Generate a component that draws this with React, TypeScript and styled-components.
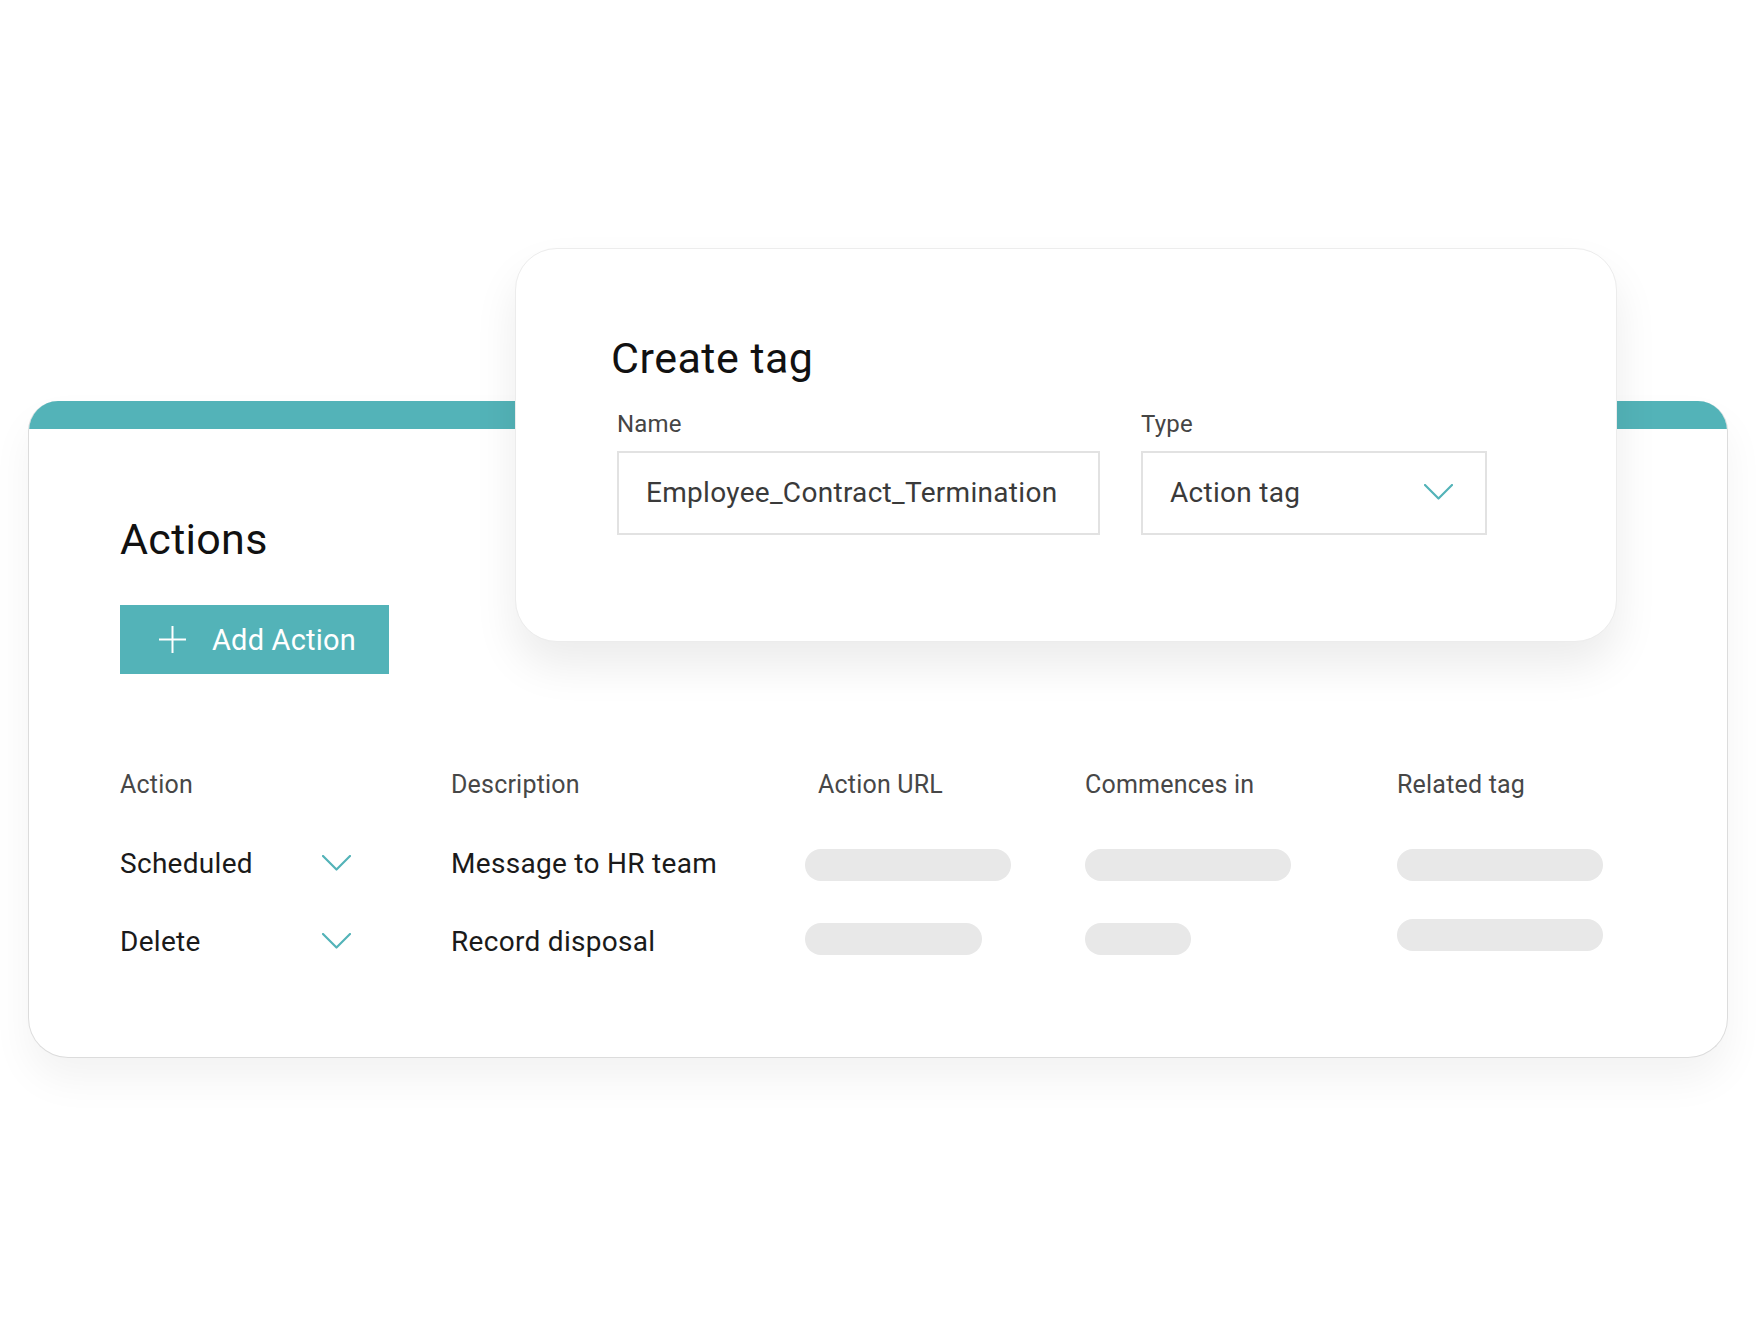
import React from "react";
import styled, { createGlobalStyle } from "styled-components";

const TEAL = "#53b3b8";

const GlobalStyle = createGlobalStyle`
  html, body {
    margin: 0;
    padding: 0;
    background: #ffffff;
  }
  body {
    font-family: "Roboto", "Liberation Sans", sans-serif;
    color: #1a1a1a;
  }
`;

const Chevron = ({ size = 29 }: { size?: number }) => (
  <svg width={size} height={16} viewBox="0 0 29 16" fill="none">
    <polyline
      points="1,1 14.5,14.5 28,1"
      stroke={TEAL}
      strokeWidth="2.2"
      strokeLinecap="round"
      strokeLinejoin="round"
    />
  </svg>
);

const PlusIcon = () => (
  <svg width={31} height={31} viewBox="0 0 31 31" fill="none">
    <line x1="15.5" y1="2" x2="15.5" y2="29" stroke="#fff" strokeWidth="2" />
    <line x1="2" y1="15.5" x2="29" y2="15.5" stroke="#fff" strokeWidth="2" />
  </svg>
);

const rows = [
  { action: "Scheduled", description: "Message to HR team", bars: [206, 206, 206], shift: [4, 4, 4] },
  { action: "Delete", description: "Record disposal", bars: [177, 106, 206], shift: [0, 0, -4] },
];

const App = () => {
  return (
    <Page>
      <GlobalStyle />
      <MainCard>
        <TopBar />
        <CardBody>
          <Heading>Actions</Heading>
          <AddButton>
            <PlusIcon />
            <span>Add Action</span>
          </AddButton>
          <Table>
            <HeaderRow>
              <HeadCell>Action</HeadCell>
              <HeadCell>Description</HeadCell>
              <HeadCell indent={13}>Action URL</HeadCell>
              <HeadCell>Commences in</HeadCell>
              <HeadCell>Related tag</HeadCell>
            </HeaderRow>
            {rows.map((r) => (
              <BodyRow key={r.action}>
                <ActionCell>
                  <span>{r.action}</span>
                  <Chevron />
                </ActionCell>
                <Cell>{r.description}</Cell>
                {r.bars.map((w, i) => (
                  <Cell key={i}>
                    <Bar shift={r.shift[i]} style={{ width: w }} />
                  </Cell>
                ))}
              </BodyRow>
            ))}
          </Table>
        </CardBody>
      </MainCard>

      <Dialog>
        <DialogTitle>Create tag</DialogTitle>
        <Fields>
          <Field>
            <Label>Name</Label>
            <InputBox width={483}>Employee_Contract_Termination</InputBox>
          </Field>
          <Field>
            <Label>Type</Label>
            <SelectBox width={346}>
              <span>Action tag</span>
              <Chevron />
            </SelectBox>
          </Field>
        </Fields>
      </Dialog>
    </Page>
  );
};

/*-----------Styles----------------*/
const Page = styled.div`
  position: relative;
  width: 1756px;
  height: 1320px;
  padding: 401px 0 0 28px;
  box-sizing: border-box;
  background: #fff;
  overflow: hidden;
`;

const MainCard = styled.section`
  width: 1700px;
  height: 657px;
  box-sizing: border-box;
  background: #fff;
  border: 1px solid #dcdcdc;
  border-top: none;
  border-radius: 30px 30px 40px 40px;
  box-shadow: 0 22px 40px rgba(0, 0, 0, 0.05);
  overflow: hidden;
  display: flex;
  flex-direction: column;
`;

const TopBar = styled.div`
  height: 28px;
  background: ${TEAL};
  flex-shrink: 0;
`;

const CardBody = styled.div`
  padding: 85px 0 0 91px;
  display: flex;
  flex-direction: column;
  align-items: flex-start;
`;

const Heading = styled.h1`
  margin: 0;
  font-size: 43px;
  line-height: 50px;
  font-weight: 400;
  color: #111;
  letter-spacing: 0.3px;
`;

const AddButton = styled.button`
  margin-top: 41px;
  width: 269px;
  height: 69px;
  border: none;
  border-radius: 0;
  background: ${TEAL};
  color: #fff;
  font-family: inherit;
  font-size: 29px;
  letter-spacing: 0.2px;
  display: flex;
  align-items: center;
  gap: 24px;
  padding: 0 0 0 37px;
  cursor: pointer;
`;

const Table = styled.div`
  margin-top: 90px;
  display: flex;
  flex-direction: column;
  gap: 38px;
`;

const gridCols = `331px 354px 280px 312px 260px`;

const HeaderRow = styled.div`
  display: grid;
  grid-template-columns: ${gridCols};
  height: 40px;
  align-items: center;
`;

const BodyRow = styled.div`
  display: grid;
  grid-template-columns: ${gridCols};
  height: 40px;
  align-items: center;
`;

const HeadCell = styled.div<{ indent?: number }>`
  font-size: 25px;
  letter-spacing: 0.2px;
  color: #474747;
  padding-left: ${(p) => p.indent || 0}px;
`;

const Cell = styled.div`
  font-size: 28px;
  letter-spacing: 0.3px;
  color: #1a1a1a;
  display: flex;
  align-items: center;
  padding-top: 2px;
`;

const ActionCell = styled(Cell)`
  width: 231px;
  justify-content: space-between;
`;

const Bar = styled.div<{ shift: number }>`
  height: 32px;
  border-radius: 16px;
  background: #e8e8e8;
  transform: translateY(${(p) => p.shift - 2}px);
`;

const Dialog = styled.div`
  position: absolute;
  left: 515px;
  top: 248px;
  width: 1102px;
  height: 394px;
  box-sizing: border-box;
  padding: 84px 0 0 101px;
  background: #fff;
  border: 1px solid #ececec;
  border-radius: 42px;
  box-shadow: 0 24px 44px rgba(0, 0, 0, 0.08);
`;

const DialogTitle = styled.h2`
  margin: 0 0 0 -6px;
  font-size: 43px;
  line-height: 50px;
  font-weight: 400;
  color: #111;
  letter-spacing: 0.5px;
`;

const Fields = styled.div`
  margin-top: 26px;
  display: flex;
  gap: 41px;
`;

const Field = styled.div`
  display: flex;
  flex-direction: column;
  gap: 12px;
`;

const Label = styled.label`
  font-size: 24px;
  line-height: 30px;
  letter-spacing: 0.2px;
  color: #454545;
`;

const InputBox = styled.div<{ width: number }>`
  width: ${(p) => p.width}px;
  height: 84px;
  box-sizing: border-box;
  border: 2px solid #e2e2e2;
  padding: 0 0 2px 27px;
  display: flex;
  align-items: center;
  font-size: 28px;
  letter-spacing: 0.3px;
  color: #3a3a3a;
  white-space: nowrap;
`;

const SelectBox = styled(InputBox)`
  justify-content: space-between;
  padding-right: 32px;
`;

export default App;
